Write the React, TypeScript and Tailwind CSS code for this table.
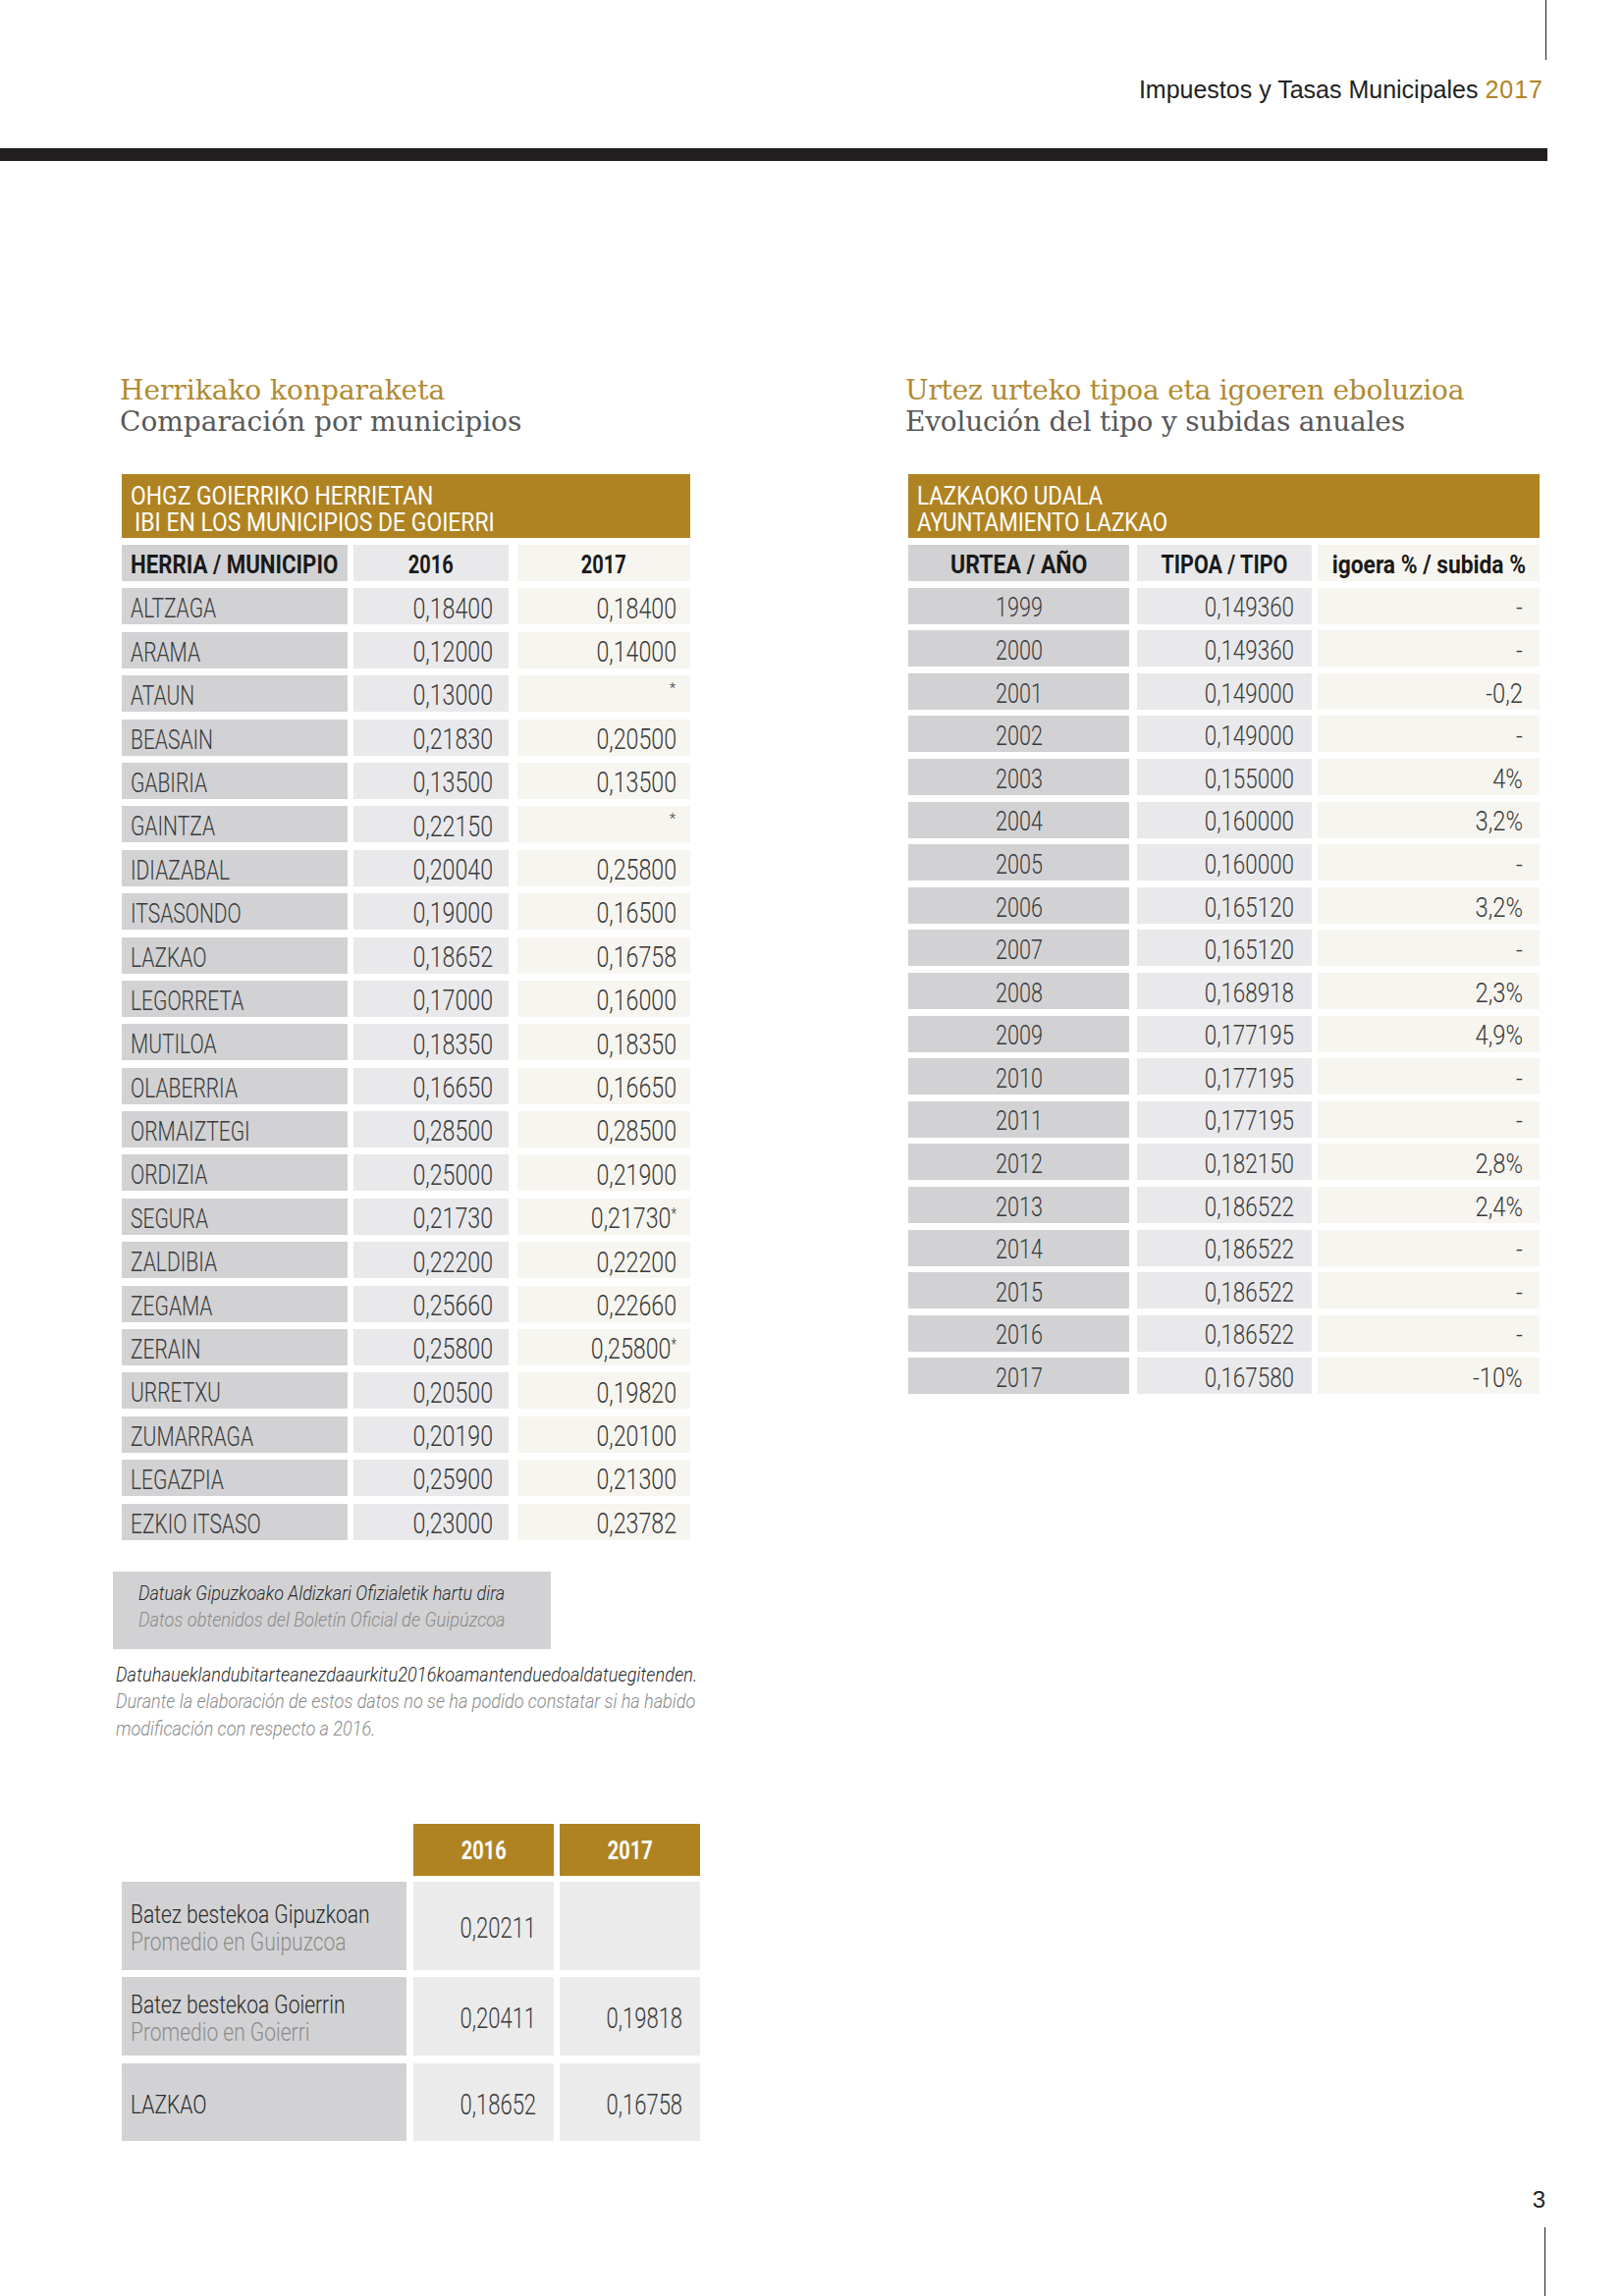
import React from "react";

const RB = "font-['Roboto','Liberation_Sans',sans-serif]";

const leftRows: [string, string, string][] = [
  ["ALTZAGA", "0,18400", "0,18400"],
  ["ARAMA", "0,12000", "0,14000"],
  ["ATAUN", "0,13000", "*"],
  ["BEASAIN", "0,21830", "0,20500"],
  ["GABIRIA", "0,13500", "0,13500"],
  ["GAINTZA", "0,22150", "*"],
  ["IDIAZABAL", "0,20040", "0,25800"],
  ["ITSASONDO", "0,19000", "0,16500"],
  ["LAZKAO", "0,18652", "0,16758"],
  ["LEGORRETA", "0,17000", "0,16000"],
  ["MUTILOA", "0,18350", "0,18350"],
  ["OLABERRIA", "0,16650", "0,16650"],
  ["ORMAIZTEGI", "0,28500", "0,28500"],
  ["ORDIZIA", "0,25000", "0,21900"],
  ["SEGURA", "0,21730", "0,21730*"],
  ["ZALDIBIA", "0,22200", "0,22200"],
  ["ZEGAMA", "0,25660", "0,22660"],
  ["ZERAIN", "0,25800", "0,25800*"],
  ["URRETXU", "0,20500", "0,19820"],
  ["ZUMARRAGA", "0,20190", "0,20100"],
  ["LEGAZPIA", "0,25900", "0,21300"],
  ["EZKIO ITSASO", "0,23000", "0,23782"],
];

const rightRows: [string, string, string][] = [
  ["1999", "0,149360", "-"],
  ["2000", "0,149360", "-"],
  ["2001", "0,149000", "-0,2"],
  ["2002", "0,149000", "-"],
  ["2003", "0,155000", "4%"],
  ["2004", "0,160000", "3,2%"],
  ["2005", "0,160000", "-"],
  ["2006", "0,165120", "3,2%"],
  ["2007", "0,165120", "-"],
  ["2008", "0,168918", "2,3%"],
  ["2009", "0,177195", "4,9%"],
  ["2010", "0,177195", "-"],
  ["2011", "0,177195", "-"],
  ["2012", "0,182150", "2,8%"],
  ["2013", "0,186522", "2,4%"],
  ["2014", "0,186522", "-"],
  ["2015", "0,186522", "-"],
  ["2016", "0,186522", "-"],
  ["2017", "0,167580", "-10%"],
];

function T({
  o = "l",
  s,
  className = "",
  children,
}: {
  o?: "l" | "r" | "c";
  s: string;
  className?: string;
  children: React.ReactNode;
}) {
  const origin = o === "l" ? "origin-left" : o === "r" ? "origin-right" : "origin-center";
  return <span className={`inline-block whitespace-nowrap ${origin} ${s} ${className}`}>{children}</span>;
}

function Val({ v }: { v: string }) {
  if (v === "*") {
    return <span className="text-[15px] leading-none relative top-[-8px] mr-[1px]">*</span>;
  }
  if (v.endsWith("*")) {
    return (
      <T o="r" s="scale-x-[0.8]">
        {v.slice(0, -1)}
        <span className="text-[16px] relative top-[-9px]">*</span>
      </T>
    );
  }
  return (
    <T o="r" s="scale-x-[0.8]">
      {v}
    </T>
  );
}

export default function App() {
  return (
    <div className="w-[1654px] h-[2339px] bg-white overflow-hidden relative">
      {/* top rule */}
      <div className="h-[61px] flex justify-end pr-[79px]">
        <div className="w-px h-full bg-[#231f20]" />
      </div>
      <div className="mt-[15px] pr-[82px] text-right font-['Liberation_Sans',sans-serif] text-[25px] leading-[30px] text-[#222]">
        Impuestos y Tasas Municipales{" "}
        <span className="text-[#b08322] tracking-[1px]">2017</span>
      </div>
      <div className="mt-[45px] w-[1576px] h-[13px] bg-[#231f20]" />

      <div className="flex mt-[218px] h-[1799px]">
        {/* LEFT COLUMN */}
        <div className="ml-[115px] w-[807px] flex flex-col">
          <div className="ml-[7px] font-['DejaVu_Serif',serif] text-[28px] leading-[32px]">
            <div className="text-[#b08a32]">Herrikako konparaketa</div>
            <div className="text-[#585858]">Comparación por municipios</div>
          </div>

          <div className={`ml-[9px] mt-[37px] w-[579px] ${RB}`}>
            <div className="h-[65px] bg-[#b08322] pt-[9px] pl-[9px] text-white text-[26px] leading-[27px]">
              <div>
                <T s="scale-x-[0.88]">OHGZ GOIERRIKO HERRIETAN</T>
              </div>
              <div className="pl-[4px]">
                <T s="scale-x-[0.88]">IBI EN LOS MUNICIPIOS DE GOIERRI</T>
              </div>
            </div>
            <div className="mt-[7px] flex flex-col gap-[7.4px]">
              <div className="flex h-[37px] text-[25px] font-bold text-[#1a1a1a]">
                <div className="w-[230px] bg-[#d2d2d4] flex items-center pl-[9px] pt-[5px]">
                  <T s="scale-x-[0.89]">HERRIA / MUNICIPIO</T>
                </div>
                <div className="ml-[6px] w-[158px] bg-[#e9e9eb] flex items-center justify-center pt-[5px]">
                  <T o="c" s="scale-x-[0.8]">2016</T>
                </div>
                <div className="ml-[9px] w-[176px] bg-[#f7f5ef] flex items-center justify-center pt-[5px]">
                  <T o="c" s="scale-x-[0.8]">2017</T>
                </div>
              </div>
              {leftRows.map(([n, a, b]) => (
                <div key={n} className="flex h-[37px] text-[#3a3a3a] font-light">
                  <div className="w-[230px] bg-[#d2d2d4] flex items-center pl-[9px] pt-[5px] text-[28px]">
                    <T s="scale-x-[0.75]">{n}</T>
                  </div>
                  <div className="ml-[6px] w-[158px] bg-[#e9e9eb] flex items-center justify-end pr-[16px] pt-[5px] text-[29px]">
                    <Val v={a} />
                  </div>
                  <div className="ml-[9px] w-[176px] bg-[#f7f5ef] flex items-center justify-end pr-[14px] pt-[5px] text-[29px]">
                    <Val v={b} />
                  </div>
                </div>
              ))}
            </div>
          </div>

          {/* source box */}
          <div className={`mt-[32px] w-[446px] h-[79px] bg-[#d2d2d4] pt-[9px] pl-[26px] italic font-light text-[20px] leading-[27px] ${RB}`}>
            <div className="text-[#2a2a2a]">
              <T s="scale-x-[0.9]">Datuak Gipuzkoako Aldizkari Ofizialetik hartu dira</T>
            </div>
            <div className="text-[#8a8a8a]">
              <T s="scale-x-[0.91]">Datos obtenidos del Boletín Oficial de Guipúzcoa</T>
            </div>
          </div>

          <div className={`ml-[3px] mt-[13px] italic font-light text-[21px] leading-[27.5px] ${RB}`}>
            <div className="w-[686px] origin-left scale-x-[0.86] text-[#1f1f1f] tracking-[0.15px] whitespace-nowrap">
              Datuhaueklandubitarteanezdaaurkitu2016koamantenduedoaldatuegitenden.
            </div>
            <div className="w-[686px] origin-left scale-x-[0.86] text-[#8a8a8a] text-justify [text-align-last:justify] whitespace-nowrap">
              Durante la elaboración de estos datos no se ha podido constatar si ha habido
            </div>
            <div className="w-[686px] origin-left scale-x-[0.86] text-[#8a8a8a] whitespace-nowrap">
              modificación con respecto a 2016.
            </div>
          </div>

          {/* averages table */}
          <div className={`ml-[9px] mt-auto ${RB}`}>
            <div className="flex ml-[297px] h-[53px] text-white text-[25px] font-bold">
              <div className="w-[143px] bg-[#b08322] flex items-center justify-center pt-[3px]">
                <T o="c" s="scale-x-[0.8]">2016</T>
              </div>
              <div className="ml-[6px] w-[143px] bg-[#b08322] flex items-center justify-center pt-[3px]">
                <T o="c" s="scale-x-[0.8]">2017</T>
              </div>
            </div>
            <div className="mt-[6px] flex h-[90px] font-light">
              <div className="w-[290px] bg-[#d2d2d4] pl-[9px] pt-[6px] flex flex-col justify-center text-[25px] leading-[28px]">
                <div className="text-[#2a2a2a]">
                  <T s="scale-x-[0.84]">Batez bestekoa Gipuzkoan</T>
                </div>
                <div className="text-[#8c8c8c]">
                  <T s="scale-x-[0.84]">Promedio en Guipuzcoa</T>
                </div>
              </div>
              <div className="ml-[7px] w-[143px] bg-[#ebebeb] flex items-center justify-end pr-[18px] pt-[6px] text-[29px] text-[#3a3a3a]">
                <T o="r" s="scale-x-[0.76]">0,20211</T>
              </div>
              <div className="ml-[6px] w-[143px] bg-[#ebebeb]" />
            </div>
            <div className="mt-[7px] flex h-[80px] font-light">
              <div className="w-[290px] bg-[#d2d2d4] pl-[9px] pt-[6px] flex flex-col justify-center text-[25px] leading-[28px]">
                <div className="text-[#2a2a2a]">
                  <T s="scale-x-[0.84]">Batez bestekoa Goierrin</T>
                </div>
                <div className="text-[#8c8c8c]">
                  <T s="scale-x-[0.84]">Promedio en Goierri</T>
                </div>
              </div>
              <div className="ml-[7px] w-[143px] bg-[#ebebeb] flex items-center justify-end pr-[18px] pt-[6px] text-[29px] text-[#3a3a3a]">
                <T o="r" s="scale-x-[0.76]">0,20411</T>
              </div>
              <div className="ml-[6px] w-[143px] bg-[#ebebeb] flex items-center justify-end pr-[18px] pt-[6px] text-[29px] text-[#3a3a3a]">
                <T o="r" s="scale-x-[0.76]">0,19818</T>
              </div>
            </div>
            <div className="mt-[8px] flex h-[79px] font-light">
              <div className="w-[290px] bg-[#d2d2d4] pl-[9px] pt-[6px] flex items-center text-[25px] text-[#2a2a2a]">
                <T s="scale-x-[0.84]">LAZKAO</T>
              </div>
              <div className="ml-[7px] w-[143px] bg-[#ebebeb] flex items-center justify-end pr-[18px] pt-[6px] text-[29px] text-[#3a3a3a]">
                <T o="r" s="scale-x-[0.76]">0,18652</T>
              </div>
              <div className="ml-[6px] w-[143px] bg-[#ebebeb] flex items-center justify-end pr-[18px] pt-[6px] text-[29px] text-[#3a3a3a]">
                <T o="r" s="scale-x-[0.76]">0,16758</T>
              </div>
            </div>
          </div>
        </div>

        {/* RIGHT COLUMN */}
        <div className="w-[660px] flex flex-col">
          <div className="font-['DejaVu_Serif',serif] text-[28px] leading-[32px] tracking-[-0.2px]">
            <div className="text-[#b08a32]">Urtez urteko tipoa eta igoeren eboluzioa</div>
            <div className="text-[#585858]">Evolución del tipo y subidas anuales</div>
          </div>

          <div className={`ml-[3px] mt-[37px] w-[643px] ${RB}`}>
            <div className="h-[65px] bg-[#b08322] pt-[9px] pl-[9px] text-white text-[26px] leading-[27px]">
              <div>
                <T s="scale-x-[0.86]">LAZKAOKO UDALA</T>
              </div>
              <div>
                <T s="scale-x-[0.86]">AYUNTAMIENTO LAZKAO</T>
              </div>
            </div>
            <div className="mt-[7px] flex flex-col gap-[6.6px]">
              <div className="flex h-[37px] text-[25px] font-bold text-[#1a1a1a]">
                <div className="w-[225px] bg-[#d2d2d4] flex items-center justify-center pt-[5px]">
                  <T o="c" s="scale-x-[0.92]">URTEA / AÑO</T>
                </div>
                <div className="ml-[8px] w-[178px] bg-[#e9e9eb] flex items-center justify-center pt-[5px]">
                  <T o="c" s="scale-x-[0.86]">TIPOA / TIPO</T>
                </div>
                <div className="ml-[6px] w-[226px] bg-[#f7f5ef] flex items-center justify-center pt-[5px]">
                  <T o="c" s="scale-x-[0.91]">igoera % / subida %</T>
                </div>
              </div>
              {rightRows.map(([y, t, s]) => (
                <div key={y} className="flex h-[37px] text-[#3a3a3a] text-[27px] font-light">
                  <div className="w-[225px] bg-[#d2d2d4] flex items-center justify-center pt-[5px]">
                    <T o="c" s="scale-x-[0.8]">{y}</T>
                  </div>
                  <div className="ml-[8px] w-[178px] bg-[#e9e9eb] flex items-center justify-end pr-[18px] pt-[5px]">
                    <T o="r" s="scale-x-[0.83]">{t}</T>
                  </div>
                  <div className="ml-[6px] w-[226px] bg-[#f7f5ef] flex items-center justify-end pr-[17px] pt-[5px]">
                    <T o="r" s="scale-x-[0.88]">{s}</T>
                  </div>
                </div>
              ))}
            </div>
          </div>
        </div>
      </div>

      {/* page number */}
      <div className="flex flex-col items-end pr-[80px] mt-[48px]">
        <div className="font-['Liberation_Sans',sans-serif] text-[24px] leading-[24px] text-[#222]">3</div>
        <div className="mt-[16px] w-px h-[80px] bg-[#231f20]" />
      </div>
    </div>
  );
}
